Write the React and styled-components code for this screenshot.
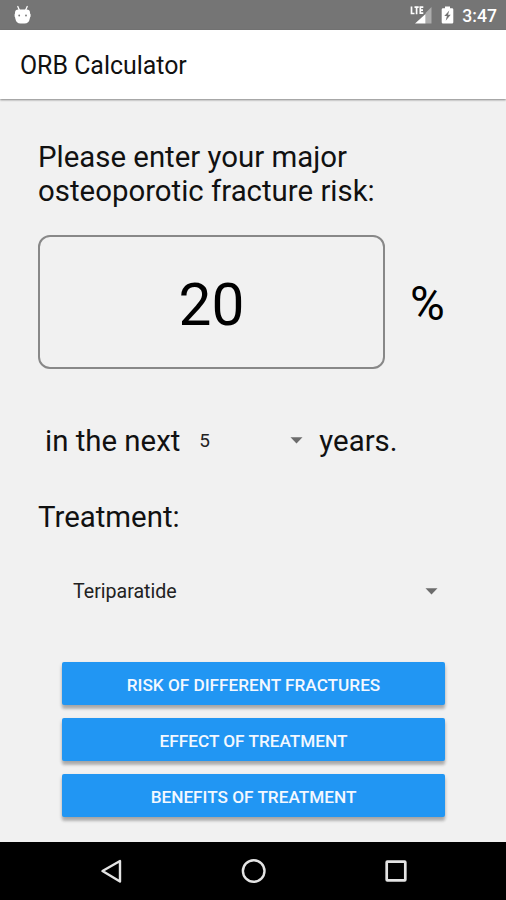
import React from "react";
import styled, { createGlobalStyle } from "styled-components";

const GlobalStyle = createGlobalStyle`
  * {
    box-sizing: border-box;
  }
  body {
    margin: 0;
    font-family: Roboto, "Liberation Sans", sans-serif;
    color: #111;
    background: #f1f1f1;
  }
`;

const Screen = styled.div`
  width: 506px;
  height: 900px;
  display: flex;
  flex-direction: column;
  background: #f1f1f1;
  overflow: hidden;
`;

// --- Status bar ---
const StatusBar = styled.div`
  height: 30px;
  flex-shrink: 0;
  display: flex;
  align-items: center;
  justify-content: space-between;
  padding: 0 9px 0 14px;
  background: #757575;
  color: #fff;
`;
const StatusIcons = styled.div`
  display: flex;
  align-items: center;
`;
const Signal = styled.svg`
  margin-right: 9px;
`;
const Battery = styled.svg`
  margin-right: 8px;
`;
const Clock = styled.span`
  font-size: 17.6px;
  font-weight: 500;
  line-height: 30px;
  padding-top: 1px;
`;

// --- App bar ---
const AppBar = styled.header`
  height: 69px;
  flex-shrink: 0;
  padding: 0 20px;
  background: #fff;
  box-shadow: 0 1px 2px rgba(0, 0, 0, 0.45);
`;
const AppTitle = styled.h1`
  margin: 0;
  font-size: 24.9px;
  font-weight: 400;
  line-height: 71px;
`;

// --- Form ---
const Content = styled.main`
  flex: 1;
  display: flex;
  flex-direction: column;
  padding: 41px 61px 0 38px;
`;
const Label = styled.div`
  font-size: 29.4px;
  line-height: 34px;
  white-space: nowrap;
`;
const RiskRow = styled.div`
  display: flex;
  align-items: center;
  gap: 25px;
  margin-top: 27px;
`;
const RiskInput = styled.div`
  width: 347px;
  height: 134px;
  flex-shrink: 0;
  border: 2px solid #888;
  border-radius: 12px;
  font-size: 58.6px;
  line-height: 136px;
  text-align: center;
  color: #000;
`;
const Percent = styled.div`
  padding-top: 3px;
  font-size: 47.5px;
  line-height: 54px;
  color: #000;
`;
const YearsRow = styled.div`
  display: flex;
  align-items: center;
  margin-top: 55px;
  padding-left: 7px;
`;
const Picker = styled.div`
  width: ${({ $width }) => $width}px;
  display: flex;
  align-items: center;
  justify-content: space-between;
  font-size: ${({ $size }) => $size}px;
  line-height: 24px;
  color: #222;
`;
const YearsPicker = styled(Picker)`
  margin: 0 16px 0 19px;
`;
const TreatmentLabel = styled(Label)`
  margin-top: 42px;
`;
const TreatmentPicker = styled(Picker)`
  margin: 46px 0 0 35px;
`;
const Arrow = styled.svg`
  flex-shrink: 0;
  margin-bottom: 1px;
`;

// --- Buttons ---
const Buttons = styled.div`
  display: flex;
  flex-direction: column;
  gap: 13px;
  margin: 58px 0 0 24px;
`;
const Button = styled.button`
  height: 43px;
  border: 0;
  border-radius: 2px;
  padding: 2px 0 0;
  background: #2196f3;
  box-shadow: 0 4px 3px rgba(0, 0, 0, 0.22), 0 2px 4px rgba(0, 0, 0, 0.14);
  font-family: inherit;
  font-size: 17.2px;
  font-weight: 500;
  color: #f3f8ff;
  white-space: nowrap;
`;

// --- Navigation bar ---
const NavBar = styled.nav`
  height: 58px;
  flex-shrink: 0;
  display: flex;
  align-items: center;
  justify-content: space-between;
  padding: 0 97px 0 98px;
  background: #000;
`;

const DropArrow = () => (
  <Arrow width="13" height="7" viewBox="0 0 13 7">
    <path d="M0.5 0.3h12l-6 6.2z" fill="#6c6c6c" />
  </Arrow>
);

const App = () => {
  return (
    <>
      <GlobalStyle />
      <Screen>
        <StatusBar>
          <svg width="18" height="20" viewBox="0 0 18 20">
            <path
              d="M3.8 1.500l1.700 4M13.200 1.500l-1.700 4"
              stroke="#fff"
              strokeWidth="1.3"
              strokeLinecap="round"
            />
            <path
              d="M1 7.7Q1 4.500 4.500 4.500h8Q16 4.500 16 7.700q0 1.200 .6 1.600v2.200q-.6.3-.8 2Q15 18.500 10.500 18.500h-4Q2.200 18.500 1.300 13.500q-.1-1.700-.7-2V9.300Q1 8.900 1 7.700z"
              fill="#fff"
            />
            <circle cx="5.200" cy="10.500" r=".9" fill="#757575" />
            <circle cx="12" cy="10.500" r=".9" fill="#757575" />
          </svg>
          <StatusIcons>
            <Signal width="22" height="20" viewBox="0 0 22 20">
              <path d="M21.500 2v16.500h-6V8z" fill="#acacac" />
              <path d="M15.500 9v9.500H5z" fill="#fff" />
              <path
                d="M1.500 1.500v7h3M4.500 2.200h4.200M6.600 2.200v7M13.300 2.200h-3v6h3M10.300 5.200h2.700"
                fill="none"
                stroke="#fff"
                strokeWidth="1.700"
              />
            </Signal>
            <Battery width="13" height="18" viewBox="0 0 13 18">
              <path
                d="M4 .5h5v1.700h2q1.300 0 1.300 1.300v12.700q0 1.300-1.300 1.300H2Q.7 17.500.7 16.200V3.500Q.7 2.200 2 2.200h2z"
                fill="#fff"
              />
              <path d="M8.300 4.500L3.300 10h2.600l-1.200 4.800 5-6H7z" fill="#757575" />
            </Battery>
            <Clock>3:47</Clock>
          </StatusIcons>
        </StatusBar>

        <AppBar>
          <AppTitle>ORB Calculator</AppTitle>
        </AppBar>

        <Content>
          <Label>
            Please enter your major
            <br />
            osteoporotic fracture risk:
          </Label>
          <RiskRow>
            <RiskInput>20</RiskInput>
            <Percent>%</Percent>
          </RiskRow>
          <YearsRow>
            <Label>in the next</Label>
            <YearsPicker $width={104} $size={19}>
              5
              <DropArrow />
            </YearsPicker>
            <Label>years.</Label>
          </YearsRow>
          <TreatmentLabel>Treatment:</TreatmentLabel>
          <TreatmentPicker $width={365} $size={19.6}>
            Teriparatide
            <DropArrow />
          </TreatmentPicker>
          <Buttons>
            <Button>RISK OF DIFFERENT FRACTURES</Button>
            <Button>EFFECT OF TREATMENT</Button>
            <Button>BENEFITS OF TREATMENT</Button>
          </Buttons>
        </Content>

        <NavBar>
          <svg width="28" height="28" viewBox="0 0 28 28">
            <path
              d="M4.500 14L22 4v20.500z"
              fill="none"
              stroke="#e4e4e4"
              strokeWidth="2.400"
              strokeLinejoin="round"
            />
          </svg>
          <svg width="28" height="28" viewBox="0 0 28 28">
            <circle cx="13.700" cy="14" r="10.800" fill="none" stroke="#e4e4e4" strokeWidth="2.400" />
          </svg>
          <svg width="28" height="28" viewBox="0 0 28 28">
            <rect
              x="5.700"
              y="4.700"
              width="18.600"
              height="18.600"
              rx=".6"
              fill="none"
              stroke="#e4e4e4"
              strokeWidth="2.700"
            />
          </svg>
        </NavBar>
      </Screen>
    </>
  );
};

export default App;
